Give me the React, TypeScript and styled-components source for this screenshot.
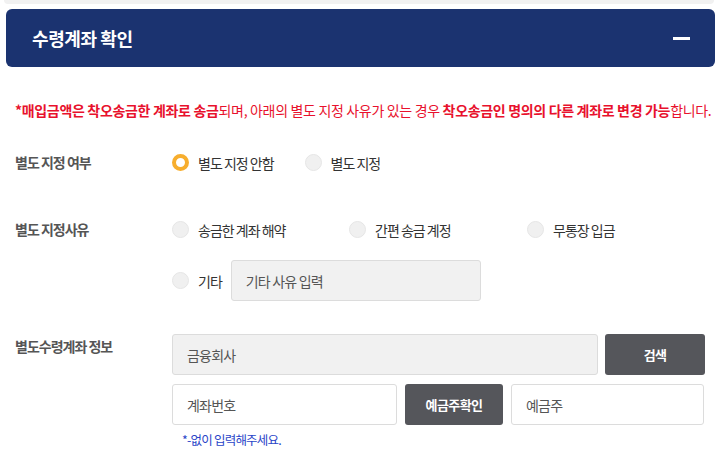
import styled, { createGlobalStyle } from 'styled-components'

const GlobalStyle = createGlobalStyle`
  body {
    margin: 0;
    background: #fff;
    font-family: 'Noto Sans CJK KR', 'Noto Sans', sans-serif;
  }
`

const Page = styled.div`
  width: 726px;
  height: 465px;
  overflow: hidden;
`

const PrevPanel = styled.div`
  height: 4px;
  margin: 0 12px 0 4px;
  background: #f1f1f1;
  border-radius: 0 0 6px 6px;
`

const Header = styled.div`
  display: flex;
  align-items: center;
  justify-content: space-between;
  height: 58px;
  margin: 5px 11px 0 6px;
  padding: 0 25px 0 26px;
  background: #1b3370;
  border-radius: 6px;
  color: #fff;
`

const Title = styled.h2`
  margin: 0;
  font-size: 18px;
  font-weight: 700;
  letter-spacing: -0.4px;
`

const Collapse = styled.span`
  display: block;
  width: 17px;
  height: 3px;
  background: #fff;
`

const Body = styled.div`
  padding: 34px 11px 0 15px;
`

const Notice = styled.p`
  margin: 0 0 35px;
  font-size: 14px;
  line-height: 18px;
  letter-spacing: -0.33px;
  color: #e8112d;
  white-space: nowrap;

  b {
    font-weight: 700;
  }
`

const Row = styled.div<{ gap: number }>`
  display: grid;
  grid-template-columns: 157px 1fr;
  margin-bottom: ${(p) => p.gap}px;
`

const Label = styled.div<{ top?: number }>`
  padding-top: ${(p) => p.top ?? 0}px;
  font-size: 14px;
  line-height: 16px;
  font-weight: 700;
  color: #555;
  letter-spacing: -1px;
`

const Options = styled.div`
  display: flex;
  gap: 31px;
  align-items: center;
`

const OptionGrid = styled.div`
  display: grid;
  grid-template-columns: 177px 178px 1fr;
  row-gap: 22px;
  align-items: center;
`

const Option = styled.label`
  display: flex;
  align-items: center;
  gap: 9px;
  font-size: 14px;
  line-height: 16px;
  color: #333;
  letter-spacing: -1px;
  cursor: pointer;
`

const Dot = styled.span<{ checked?: boolean }>`
  flex: 0 0 auto;
  box-sizing: border-box;
  width: 17px;
  height: 17px;
  border-radius: 50%;
  background: ${(p) => (p.checked ? '#fff' : '#f0f0f0')};
  border: ${(p) => (p.checked ? '4px solid #f7ae2e' : '1px solid #e6e6e6')};
`

const EtcLine = styled.div`
  grid-column: 1 / -1;
  display: flex;
  align-items: center;
  gap: 9px;
`

const Field = styled.div<{ width: number; filled?: boolean }>`
  box-sizing: border-box;
  width: ${(p) => p.width}px;
  height: 41px;
  display: flex;
  align-items: center;
  padding-left: 14px;
  border: 1px solid #dcdcdc;
  border-radius: 3px;
  background: ${(p) => (p.filled ? '#f1f1f1' : '#fff')};
  font-size: 14px;
  color: #555;
  letter-spacing: -0.8px;
`

const DarkButton = styled.button<{ width: number }>`
  box-sizing: border-box;
  width: ${(p) => p.width}px;
  height: 41px;
  border: 0;
  border-radius: 3px;
  background: #55565b;
  color: #fff;
  font-family: inherit;
  font-size: 13px;
  font-weight: 700;
  letter-spacing: -0.6px;
  cursor: pointer;
`

const AccountBox = styled.div`
  display: flex;
  flex-direction: column;
  gap: 9px;
`

const FieldLine = styled.div<{ gap: number }>`
  display: flex;
  gap: ${(p) => p.gap}px;
`

const Hint = styled.p`
  margin: -4px 0 0 10px;
  font-size: 12.5px;
  color: #2a45c8;
  letter-spacing: -0.8px;
`

export default function App() {
  return (
    <Page>
      <GlobalStyle />
      <PrevPanel />
      <Header>
        <Title>수령계좌 확인</Title>
        <Collapse />
      </Header>
      <Body>
        <Notice>
          <b>*매입금액은 착오송금한 계좌로 송금</b>되며, 아래의 별도 지정 사유가 있는 경우{' '}
          <b>착오송금인 명의의 다른 계좌로 변경 가능</b>합니다.
        </Notice>

        <Row gap={50}>
          <Label>별도 지정 여부</Label>
          <Options>
            <Option>
              <Dot checked />
              별도 지정 안함
            </Option>
            <Option>
              <Dot />
              별도 지정
            </Option>
          </Options>
        </Row>

        <Row gap={33}>
          <Label>별도 지정사유</Label>
          <OptionGrid>
            <Option>
              <Dot />
              송금한 계좌 해약
            </Option>
            <Option>
              <Dot />
              간편 송금 계정
            </Option>
            <Option>
              <Dot />
              무통장 입금
            </Option>
            <EtcLine>
              <Option>
                <Dot />
                기타
              </Option>
              <Field width={250} filled>
                기타 사유 입력
              </Field>
            </EtcLine>
          </OptionGrid>
        </Row>

        <Row gap={0}>
          <Label top={4}>별도수령계좌 정보</Label>
          <AccountBox>
            <FieldLine gap={7}>
              <Field width={426} filled>
                금융회사
              </Field>
              <DarkButton width={100}>검색</DarkButton>
            </FieldLine>
            <FieldLine gap={8}>
              <Field width={225}>계좌번호</Field>
              <DarkButton width={98}>예금주확인</DarkButton>
              <Field width={193}>예금주</Field>
            </FieldLine>
            <Hint>*-없이 입력해주세요.</Hint>
          </AccountBox>
        </Row>
      </Body>
    </Page>
  )
}
